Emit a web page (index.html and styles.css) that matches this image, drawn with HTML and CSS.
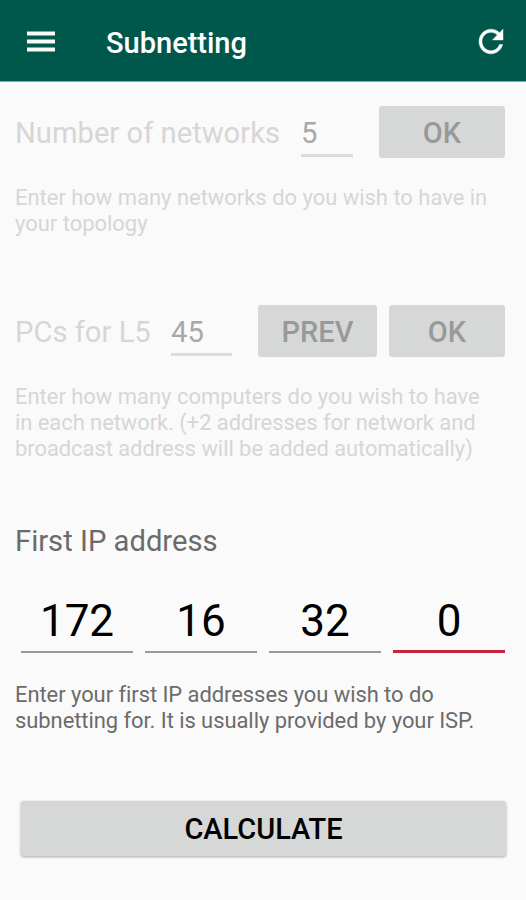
FILE: index.html
```html
<!DOCTYPE html>
<html lang="en">
<head>
    <meta charset="UTF-8">
    <meta name="viewport" content="width=device-width, initial-scale=1.0">
    <title>Subnetting</title>
    <link rel="stylesheet" href="styles.css">
</head>
<body>

<header class="toolbar">
    <svg class="menu-icon" width="28" height="21" viewBox="0 0 28 21">
        <path d="M0 .5h28v4H0zM0 8.500h28v4H0zM0 16.500h28v4H0z" fill="#f7faf5"/>
    </svg>
    <h1>Subnetting</h1>
    <svg class="refresh-icon" width="36" height="37" viewBox="0 0 24 24" preserveAspectRatio="none">
        <path d="M17.650 6.350C16.200 4.900 14.210 4 12 4c-4.420 0-7.990 3.580-7.990 8s3.570 8 7.990 8c3.730 0 6.840-2.550 7.730-6h-2.080c-.82 2.330-3.040 4-5.650 4-3.310 0-6-2.690-6-6s2.690-6 6-6c1.660 0 3.140.69 4.220 1.780L13 11h7V4l-2.350 2.350z" fill="#fff" stroke="#fff" stroke-width=".3"/>
    </svg>
</header>

<main>
    <!-- Step 1: number of networks -->
    <section class="step disabled">
        <div class="row">
            <span class="label label-networks">Number of networks</span>
            <span class="field field-networks">5</span>
            <button class="btn btn-networks" disabled>OK</button>
        </div>
        <p class="hint">Enter how many networks do you wish to have in<br>your topology</p>
    </section>

    <!-- Step 2: hosts in each network -->
    <section class="step step-hosts disabled">
        <div class="row">
            <span class="label label-hosts">PCs for L5</span>
            <span class="field field-hosts">45</span>
            <button class="btn btn-prev" disabled>PREV</button>
            <button class="btn btn-next" disabled>OK</button>
        </div>
        <p class="hint">Enter how many computers do you wish to have<br><span class="hint-tight">in each network. (+2 addresses for network and<br>broadcast address will be added automatically)</span></p>
    </section>

    <!-- Step 3: first IP address -->
    <section class="step step-ip">
        <h2 class="label">First IP address</h2>
        <div class="octets">
            <span class="octet">172</span>
            <span class="octet">16</span>
            <span class="octet">32</span>
            <span class="octet active">0</span>
        </div>
        <p class="hint"><span class="hint-tight">Enter your first IP addresses you wish to do<br>subnetting for. It is usually provided by your ISP.</span></p>
    </section>

    <button class="btn calculate">CALCULATE</button>
</main>

</body>
</html>
```
FILE: styles.css
```css
* {
    box-sizing: border-box;
}
body {
    margin: 0;
    min-height: 900px;
    background: #fafafa;
    font-family: Roboto, sans-serif;
    color: #6b6b6b;
}
.toolbar {
    display: flex;
    align-items: center;
    height: 82px;
    padding: 1px 17px 0 27px;
    background: #00574b;
    border-bottom: 1px solid #8ba5a1;
    color: #fff;
}
.toolbar h1 {
    flex: 1;
    margin: 4px 0 0 51px;
    font-size: 29px;
    line-height: 34px;
    font-weight: 500;
}
main {
    padding: 24px 21px 0 15px;
}
.row {
    display: flex;
    height: 52px;
}
.label {
    margin: 0;
    font-size: 29.2px;
    line-height: 34px;
    font-weight: 400;
    white-space: nowrap;
}
.row .label {
    padding-top: 10px;
}
.label-networks {
    width: 286px;
}
.label-hosts {
    width: 156px;
}
.field {
    height: 51px;
    padding-top: 10px;
    border-bottom: 3px solid #dcdcdc;
    font-size: 29.2px;
    line-height: 34px;
    color: #a8a8a8;
}
.field-networks {
    width: 52px;
}
.field-hosts {
    width: 61px;
}
.btn {
    height: 52px;
    padding: 0;
    border: none;
    border-radius: 3px;
    background: #d6d8d7;
    font-family: inherit;
    font-size: 29px;
    line-height: 34px;
    font-weight: 500;
    color: #000;
}
.btn:disabled {
    padding-top: 2px;
    color: #999;
}
.btn-networks {
    width: 126px;
    margin-left: auto;
}
.btn-prev {
    width: 119px;
    margin-left: auto;
}
.btn-next {
    width: 116px;
    margin-left: 12px;
}
.hint {
    margin: 27px 0 0;
    font-size: 21.95px;
    line-height: 26px;
    white-space: nowrap;
}
.hint-tight {
    letter-spacing: -0.05px;
}
.disabled .label,
.disabled .hint {
    color: #d6d6d6;
}
.step-hosts {
    margin-top: 68px;
}
.step-ip {
    margin-top: 62px;
}
.octets {
    display: grid;
    grid-template-columns: repeat(4, 112px);
    gap: 12px;
    margin: 36px 0 0 6px;
}
.octet {
    height: 59px;
    padding-top: 1px;
    border-bottom: 2px solid #999;
    font-size: 44px;
    line-height: 52px;
    color: #000;
    text-align: center;
}
.octet.active {
    border-bottom: 3px solid #c9243f;
}
.step-ip .hint {
    margin-top: 29px;
}
.calculate {
    display: block;
    width: 485px;
    height: 55px;
    margin: 67px 0 0 6px;
    box-shadow: 0 1px 3px rgba(0, 0, 0, 0.35);
}
```
